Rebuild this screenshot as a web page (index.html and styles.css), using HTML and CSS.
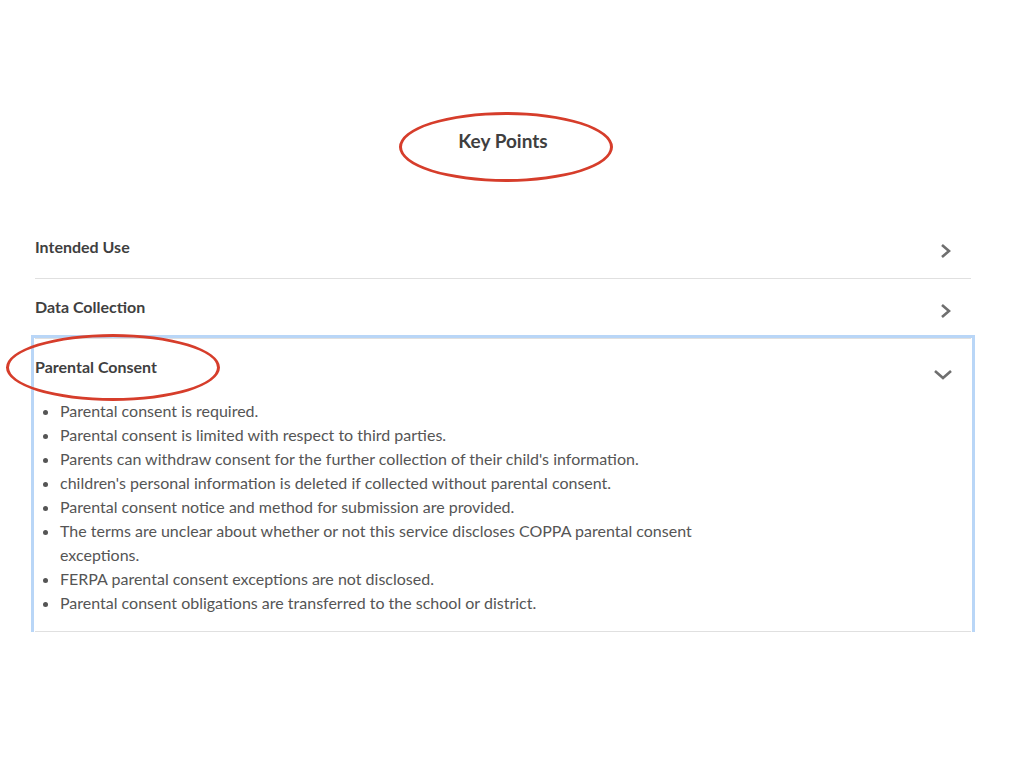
FILE: index.html
```html
<!DOCTYPE html>
<html lang="en">
<head>
    <meta charset="UTF-8">
    <meta name="viewport" content="width=device-width, initial-scale=1.0">
    <title>Key Points</title>
    <link rel="stylesheet" href="styles.css">
</head>
<body>
    <div class="page">
        <h1 class="title">Key Points</h1>
        <div class="accordion">
            <div class="item">
                <div class="item-header">
                    <span>Intended Use</span>
                    <svg class="chev" width="14" height="16" viewBox="0 0 14 16"><path d="M3 2 L10 8 L3 14" fill="none" stroke="#6f6f6f" stroke-width="2.6"/></svg>
                </div>
            </div>
            <div class="item">
                <div class="item-header">
                    <span>Data Collection</span>
                    <svg class="chev" width="14" height="16" viewBox="0 0 14 16"><path d="M3 2 L10 8 L3 14" fill="none" stroke="#6f6f6f" stroke-width="2.6"/></svg>
                </div>
            </div>
            <div class="item open">
                <div class="item-header">
                    <span>Parental Consent</span>
                    <svg class="chev down" width="20" height="14" viewBox="0 0 20 14"><path d="M2 3 L10 10 L18 3" fill="none" stroke="#6f6f6f" stroke-width="2.6"/></svg>
                </div>
                <ul class="points">
                    <li>Parental consent is required.</li>
                    <li>Parental consent is limited with respect to third parties.</li>
                    <li>Parents can withdraw consent for the further collection of their child's information.</li>
                    <li>children's personal information is deleted if collected without parental consent.</li>
                    <li>Parental consent notice and method for submission are provided.</li>
                    <li>The terms are unclear about whether or not this service discloses COPPA parental consent exceptions.</li>
                    <li>FERPA parental consent exceptions are not disclosed.</li>
                    <li>Parental consent obligations are transferred to the school or district.</li>
                </ul>
            </div>
        </div>
    </div>
    <div class="mark mark-title"></div>
    <div class="mark mark-consent"></div>
</body>
</html>
```

FILE: styles.css
```css
body {
    margin: 0;
    background: #fff;
    font-family: Lato, "Open Sans", sans-serif;
    color: #555;
}
.page {
    width: 936px;
    padding: 129px 0 0 35px;
}
.title {
    margin: 0 0 66px;
    text-align: center;
    font-size: 19px;
    line-height: 24px;
    font-weight: 700;
    color: #3f3f3f;
}
.item {
    border-bottom: 1px solid #e0e0e0;
}
.item.open {
    outline: 3px solid #b9d6f7;
    outline-offset: 1px;
}
.item-header {
    display: flex;
    justify-content: space-between;
    align-items: center;
    height: 59px;
    font-size: 16px;
    font-weight: 700;
    color: #3f3f3f;
}
.item-header span {
    margin-bottom: 4px;
}
.chev {
    margin: 4px 18px 0 0;
}
.chev.down {
    margin: 12px 18px 0 0;
}
.points {
    margin: 1px 0 0;
    padding: 0 0 16px 25px;
    max-width: 660px;
    font-size: 16px;
    line-height: 24px;
    color: #555;
}
.mark {
    position: absolute;
    border: 3px solid #d63d2b;
    border-radius: 50%;
    box-sizing: border-box;
}
.mark-title {
    left: 399px;
    top: 112px;
    width: 214px;
    height: 70px;
}
.mark-consent {
    left: 6px;
    top: 334px;
    width: 214px;
    height: 67px;
}
```
